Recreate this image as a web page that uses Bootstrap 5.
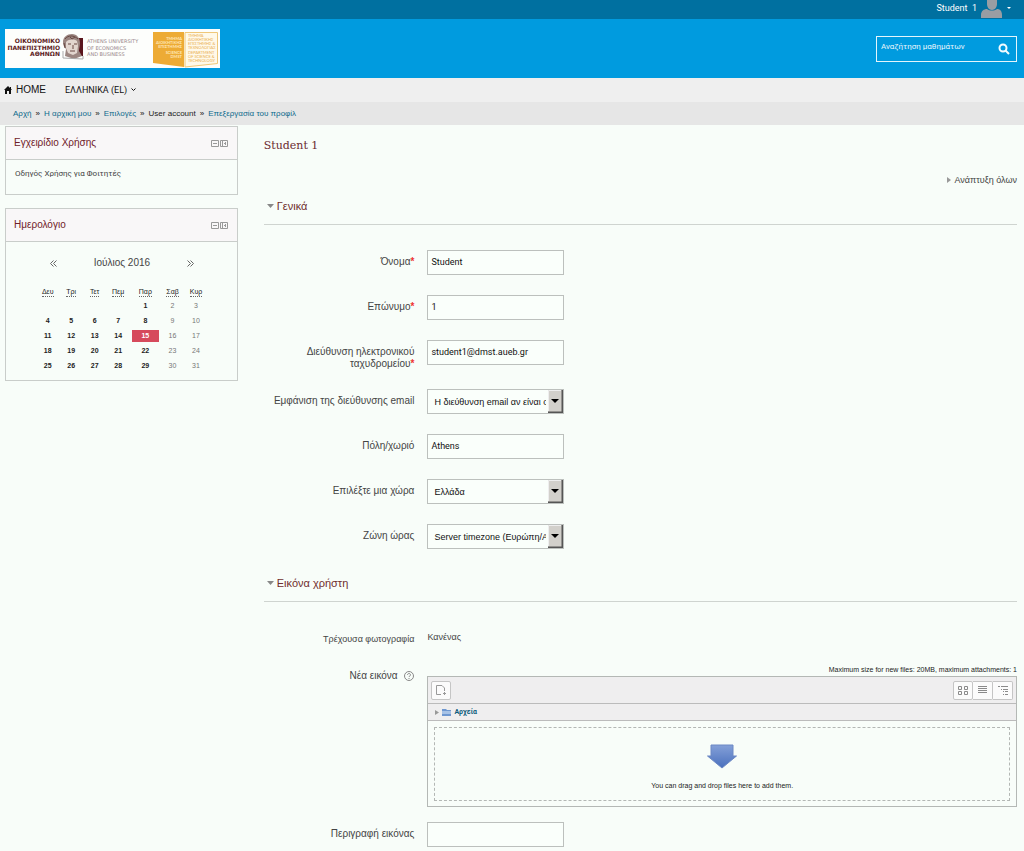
<!DOCTYPE html>
<html lang="el">
<head>
<meta charset="utf-8">
<meta name="viewport" content="width=device-width, initial-scale=1">
<title>Student 1: Επεξεργασία του προφίλ</title>
<link href="https://cdn.jsdelivr.net/npm/bootstrap@5.3.0/dist/css/bootstrap.min.css" rel="stylesheet">
<style>
body{background:#f8fdf9;color:#444;font:10px/12px "Liberation Sans",Arial,sans-serif}
a{color:inherit;text-decoration:none}
.topbar{background:#0070a0;height:19px;color:#fff;font:9px/16px Roboto,sans-serif;padding-right:13px}
.topbar a{gap:4px}
.topbar svg{display:block}
.brandbar{background:#009bdf;height:59px;padding:0 7px 0 5px}
.search-box{width:141px;height:26px;border:1px solid #e4f5fc;padding:0 6px 0 4px}
.search-box input{min-width:0;background:none;border:0;outline:0;color:#fff;font:8px/12px Roboto,sans-serif;padding:0 0 4px}
.search-box input::placeholder{color:#e8f6fc;opacity:1}
.search-box button,.icon-btn{background:none;border:0;padding:0;line-height:0}
.menubar{background:#efefef;height:24px;padding:0 4px;color:#111;gap:19px}
.lang-link{font:9px/12px Roboto,sans-serif}
.crumbs{background:#e6e6e6;height:23px;padding:0 13px;font:8px/12px "Liberation Sans",sans-serif;gap:4px;color:#222;margin:0}
.crumbs a{color:#0d6a8c}
.crumbs li+li::before{content:"»";margin-right:4px;color:#111}
.page-grid{padding:1px 7px 0 5px;gap:26px}
.side-col{width:23%;flex:none}
.block-box{border:1px solid #c9cdca;margin-bottom:13px}
.block-head{background:#f9f7f8;border-bottom:1px solid #c9cdca;height:33px;padding:0 9px 0 8px}
.block-head h2{font-size:10px;line-height:12px;margin:0;color:#702028}
.block-tools{gap:1px}
.guide{padding:8px 9px 14px;font:8px/12px Roboto,sans-serif}
.cal{padding:15px 29px 7px 30px}
.cal-nav{padding:0 14px;margin-bottom:15px}
.cal table{width:100%;table-layout:fixed;font-size:7px;line-height:12px;text-align:center;color:#222;font-weight:bold}
.cal th,.cal td{padding:0;height:15px;line-height:12px;vertical-align:middle}
.cal tbody tr:first-child td{height:14px}
.cal th{font-weight:normal;text-align:center}
.cal abbr{cursor:default;text-decoration:none;border-bottom:1px dotted #666;line-height:8px;display:inline-block}
.cal td:nth-child(n+6){color:#777;font-weight:normal}
.cal col.wide{width:18%}
.cal td span{display:block;background:#d64a5c;color:#fff;margin:0 2px}
.user-title{font:11px/16px "DejaVu Serif",serif;color:#6b2b30;margin:12px 0 20px}
.expand{gap:4px;font-size:9px;margin-bottom:14px}
.sect{border-bottom:1px solid #cfd4d0;padding:0 3px 12px;margin-bottom:25px}
.sect h3{font-size:11px;line-height:12px;margin:0;color:#702d2d}
.sect .icon-btn{margin-right:3px}
.f-row{display:flex;gap:13px;margin-bottom:18px;min-height:27px}
.f-row.plain{min-height:0;font-size:9px}
.f-row.files{margin-bottom:15px}
.f-label{width:20%;flex:none;text-align:right;line-height:12px;padding:6px 0 1px}
.f-label b{color:#e33}
.f-label span{display:block}
.f-in{width:137px;height:25px;border:1px solid #bcc0bd;background-color:#fafffb;border-radius:0;font:9px/12px Roboto,sans-serif;color:#111;padding:0 3px 2px}
select.f-in{appearance:none;font-family:"Liberation Sans",sans-serif;padding:0 17px 0 6px;background-image:url("data:image/svg+xml,%3Csvg xmlns='http://www.w3.org/2000/svg' width='15' height='23'%3E%3Cpath fill='%23d2d0cb' d='M0 0h15v23H0z'/%3E%3Cpath fill='none' stroke='%23555' stroke-width='2' d='M14.500 0v22.500H0'/%3E%3Cpath fill='none' stroke='%23eee' d='M.5 21V.5H13'/%3E%3Cpath fill='%23000' d='M3 9h8L7 13z'/%3E%3C/svg%3E");background-repeat:no-repeat;background-position:right 0 top 0}
.fm{border:1px solid #b4b8b5}
.limits{font:7px/12px "Liberation Sans",sans-serif;text-align:right;color:#222}
.fm-tools{background:#efeeef;height:27px;padding:0 3px;border-bottom:1px solid #bbb}
.fm-btn{width:20px;height:19px;border:1px solid #c5c5c5;background:#fbfbfb;border-radius:2px;padding:0;display:flex;align-items:center;justify-content:center}
.fm-btn+.fm-btn{border-left:0;border-radius:0 2px 2px 0}
.fm-path{background:#efeeef;height:17px;padding:0 7px;border-bottom:1px solid #bbb;font:bold 7px/12px Roboto,sans-serif;gap:3px}
.fm-path a{color:#0d5c7c}
.drop{border:1px dashed #b3b7b4;margin:6px 6px 5px;padding-top:8px;height:74px;gap:10px;font-size:7px;color:#222}
</style>
</head>
<body>
<header>
<div class="topbar d-flex justify-content-end align-items-start overflow-hidden">
<a href="#" class="d-flex">Student&nbsp; 1
<svg width="22" height="18" viewBox="0 0 22 18"><path fill="#999da3" d="M6 0h10v4c0 3-2 6-5 6S6 7 6 4zM0 18v-3c0-4 3-6 6-6 3 2 7 2 10 0 3 0 5 2 5 6v3z"/></svg>
<svg width="4" height="16" viewBox="0 0 4 16"><path fill="#fff" d="M0 7h4L2 9z"/></svg></a>
</div>
<div class="brandbar d-flex justify-content-between align-items-center">
<a href="#" aria-label="Αρχική">
<svg class="d-block" width="215" height="39" viewBox="0 0 215 39">
<path fill="#fdfefc" d="M0 0h215v39H0z"/>
<g font-family="DejaVu Sans,sans-serif" font-weight="700" font-size="6" fill="#5c1b22" text-anchor="end"><text x="55" y="14">ΟΙΚΟΝΟΜΙΚΟ</text><text x="55" y="21">ΠΑΝΕΠΙΣΤΗΜΙΟ</text><text x="55" y="27">ΑΘΗΝΩΝ</text></g>
<path fill="#5a151d" d="M63 9h15v18H63z"/>
<path fill="#9b8681" d="M58 13c0-5 4-8 9-8 5 0 8 4 8 9 0 3-1 5-1 8l3 5-8 3-9-3 1-7c-2-2-3-4-3-7z"/>
<path fill="#e2d6cf" d="M61 13c3-3 8-3 11-1l1 5-1 7-4 2-5-2-2-5z"/>
<path fill="none" stroke="#684943" d="M60 10c3-4 9-4 13 0M63 15h3m3 0h3m-4 1v4m-3 2h5M59 14l1 5M65 8l2 2 3-2"/>
<path fill="none" stroke="#aaa" d="M58 22v7l20 1v-3"/>
<g font-family="DejaVu Sans,sans-serif" font-size="5" fill="#98868a"><text x="82" y="14">ATHENS UNIVERSITY</text><text x="82" y="21">OF ECONOMICS</text><text x="82" y="27">AND BUSINESS</text></g>
<path fill="#edab35" d="M148 3h31v35l-31-4z"/>
<path fill="#fff9e9" stroke="#efc779" d="M180 3.500h32.500v31L180 38z"/>
<g font-family="Lato,sans-serif" font-weight="700" font-size="4" fill="#ffe7b8" text-anchor="end"><text x="177" y="11">ΤΜΗΜΑ</text><text x="177" y="15">ΔΙΟΙΚΗΤΙΚΗΣ</text><text x="177" y="19">ΕΠΙΣΤΗΜΗΣ</text><text x="177" y="25">SCIENCE</text><text x="177" y="29">DMST</text></g>
<g font-family="Lato,sans-serif" font-size="4" fill="#e9ae50"><text x="183" y="8">ΤΜΗΜΑ</text><text x="183" y="12">ΔΙΟΙΚΗΤΙΚΗΣ</text><text x="183" y="16">ΕΠΙΣΤΗΜΗΣ &amp;</text><text x="183" y="20">ΤΕΧΝΟΛΟΓΙΑΣ</text><text x="183" y="25">DEPARTMENT</text><text x="183" y="29">OF SCIENCE &amp;</text><text x="183" y="33">TECHNOLOGY</text></g>
</svg></a>
<form class="search-box d-flex align-items-center">
<input class="flex-grow-1" type="search" aria-label="Αναζήτηση μαθημάτων" placeholder="Αναζήτηση μαθημάτων">
<button type="button" aria-label="Αναζήτηση"><svg width="12" height="12" viewBox="0 0 12 12" fill="none" stroke="#f2fbff" stroke-width="2"><circle cx="5" cy="5" r="3.500"/><path d="M7.500 7.500 11 11"/></svg></button>
</form>
</div>
<nav class="menubar d-flex align-items-center">
<a href="#" class="d-flex align-items-center"><svg class="me-1" width="8" height="8" viewBox="0 0 8 8"><path fill="#111" d="M4 0 0 4h1v4h2V5h2v3h2V4h1L7 3V1H6v1z"/></svg>HOME</a>
<a href="#" class="lang-link d-flex align-items-center">ΕΛΛΗΝΙΚΑ (EL)<svg class="ms-1" width="5" height="4" viewBox="0 0 5 4"><path fill="none" stroke="#111" d="m.5.500 2 2 2-2"/></svg></a>
</nav>
<ol class="crumbs list-unstyled d-flex align-items-center">
<li><a href="#">Αρχή</a></li><li><a href="#">Η αρχική μου</a></li><li><a href="#">Επιλογές</a></li><li>User account</li><li><a href="#">Επεξεργασία του προφίλ</a></li>
</ol>
</header>

<svg width="0" height="0" class="position-absolute"><defs>
<g id="i-min" fill="none" stroke="#999"><path d="M.5.500h7v6h-7zM2 3.500h4"/></g>
<g id="i-dock" fill="none" stroke="#999"><path d="M.5.500h7v6h-7zM2.500 1v5M5.500 2v3M4 3.500h2"/></g>
</defs></svg>

<div class="page-grid d-flex">
<aside class="side-col">
<section class="block-box">
<div class="block-head d-flex align-items-center justify-content-between"><h2 class="fw-normal">Εγχειρίδιο Χρήσης</h2>
<div class="block-tools d-flex"><button class="icon-btn" aria-label="Απόκρυψη"><svg width="8" height="7"><use href="#i-min"/></svg></button><button class="icon-btn" aria-label="Προσάρτηση"><svg width="8" height="7"><use href="#i-dock"/></svg></button></div></div>
<div class="guide"><a href="#">Οδηγός Χρήσης για Φοιτητές</a></div>
</section>
<section class="block-box">
<div class="block-head d-flex align-items-center justify-content-between"><h2 class="fw-normal">Ημερολόγιο</h2>
<div class="block-tools d-flex"><button class="icon-btn" aria-label="Απόκρυψη"><svg width="8" height="7"><use href="#i-min"/></svg></button><button class="icon-btn" aria-label="Προσάρτηση"><svg width="8" height="7"><use href="#i-dock"/></svg></button></div></div>
<div class="cal">
<div class="cal-nav d-flex justify-content-between"><a href="#" aria-label="Προηγούμενος"><svg width="7" height="7" viewBox="0 0 7 7" fill="none" stroke="#666"><path d="M3.500.500l-3 3 3 3m3-6-3 3 3 3"/></svg></a><a href="#">Ιούλιος 2016</a><a href="#" aria-label="Επόμενος"><svg width="7" height="7" viewBox="0 0 7 7" fill="none" stroke="#666"><path d="m.5.500 3 3-3 3m3-6 3 3-3 3"/></svg></a></div>
<table>
<colgroup><col><col><col><col><col class="wide"><col><col></colgroup>
<thead><tr><th><abbr>Δευ</abbr></th><th><abbr>Τρι</abbr></th><th><abbr>Τετ</abbr></th><th><abbr>Πεμ</abbr></th><th><abbr>Παρ</abbr></th><th><abbr>Σαβ</abbr></th><th><abbr>Κυρ</abbr></th></tr></thead>
<tbody>
<tr><td></td><td></td><td></td><td></td><td>1</td><td>2</td><td>3</td></tr>
<tr><td>4</td><td>5</td><td>6</td><td>7</td><td>8</td><td>9</td><td>10</td></tr>
<tr><td>11</td><td>12</td><td>13</td><td>14</td><td><span>15</span></td><td>16</td><td>17</td></tr>
<tr><td>18</td><td>19</td><td>20</td><td>21</td><td>22</td><td>23</td><td>24</td></tr>
<tr><td>25</td><td>26</td><td>27</td><td>28</td><td>29</td><td>30</td><td>31</td></tr>
</tbody></table>
</div>
</section>
</aside>

<main class="flex-grow-1">
<h1 class="user-title">Student 1</h1>
<a href="#" class="expand d-flex justify-content-end align-items-center"><svg width="4" height="6"><path fill="#999" d="M0 0v6l4-3z"/></svg>Ανάπτυξη όλων</a>
<form>
<div class="sect d-flex align-items-center"><button type="button" class="icon-btn" aria-label="Γενικά"><svg width="7" height="4"><path fill="#888" d="M0 0h7L3.500 4z"/></svg></button><h3 class="fw-normal">Γενικά</h3></div>
<div class="f-row"><label class="f-label" for="fn">Όνομα<b>*</b></label><input class="f-in" id="fn" value="Student"></div>
<div class="f-row"><label class="f-label" for="ln">Επώνυμο<b>*</b></label><input class="f-in" id="ln" value="1"></div>
<div class="f-row"><label class="f-label" for="em"><span>Διεύθυνση ηλεκτρονικού</span> <span>ταχυδρομείου<b>*</b></span></label><input class="f-in" id="em" value="student1@dmst.aueb.gr"></div>
<div class="f-row"><label class="f-label" for="sh">Εμφάνιση της διεύθυνσης email</label><select class="f-in" id="sh"><option>Η διεύθυνση email αν είναι ορατή</option></select></div>
<div class="f-row"><label class="f-label" for="ct">Πόλη/χωριό</label><input class="f-in" id="ct" value="Athens"></div>
<div class="f-row"><label class="f-label" for="co">Επιλέξτε μια χώρα</label><select class="f-in" id="co"><option>Ελλάδα</option></select></div>
<div class="f-row"><label class="f-label" for="tz">Ζώνη ώρας</label><select class="f-in" id="tz"><option>Server timezone (Ευρώπη/Αθήνα)</option></select></div>

<div class="sect d-flex align-items-center pt-2"><button type="button" class="icon-btn" aria-label="Εικόνα χρήστη"><svg width="7" height="4"><path fill="#888" d="M0 0h7L3.500 4z"/></svg></button><h3 class="fw-normal">Εικόνα χρήστη</h3></div>
<div class="f-row plain"><div class="f-label">Τρέχουσα φωτογραφία</div><div class="pt-1">Κανένας</div></div>
<div class="f-row files"><div class="f-label">Νέα εικόνα <button type="button" class="icon-btn ms-1 align-middle" aria-label="Βοήθεια"><svg width="10" height="10" viewBox="0 0 10 10" fill="none" stroke="#888"><circle cx="5" cy="5" r="4.500"/><path d="M3.500 4c0-2 3-2 3 0 0 1-1.500 1-1.500 2M5 7v1"/></svg></button></div>
<div class="flex-grow-1">
<div class="limits">Maximum size for new files: 20MB, maximum attachments: 1</div>
<div class="fm">
<div class="fm-tools d-flex align-items-center justify-content-between">
<button type="button" class="fm-btn" aria-label="Προσθήκη"><svg width="10" height="10" viewBox="0 0 10 10" fill="none" stroke="#999"><path d="M5 9.500H.5v-9H6L8.500 3v3M7 8.500h3M8.500 7v3"/></svg></button>
<div class="d-flex">
<button type="button" class="fm-btn" aria-label="Εικονίδια"><svg width="10" height="9" viewBox="0 0 10 9" fill="none" stroke="#8a8a8a"><path d="M.5.500h3v3h-3zM6.500.500h3v3h-3zM.5 5.500h3v3h-3zM6.500 5.500h3v3h-3z"/></svg></button>
<button type="button" class="fm-btn" aria-label="Λίστα"><svg width="9" height="8" viewBox="0 0 9 8" stroke="#8a8a8a"><path d="M0 .5h9M0 2.500h9M0 4.500h9M0 6.500h9"/></svg></button>
<button type="button" class="fm-btn" aria-label="Δέντρο"><svg width="10" height="9" viewBox="0 0 10 9" stroke="#8a8a8a"><path d="M0 .5h2M3 .5h7M3 3.500h1M5 3.500h5M5 5.500h1M7 5.500h3M5 8.500h1M7 8.500h3"/></svg></button>
</div></div>
<div class="fm-path d-flex align-items-center"><svg width="4" height="5"><path fill="#999" d="M0 0v5l4-2.500z"/></svg><svg width="9" height="7" viewBox="0 0 9 7"><path fill="#6f97d0" d="M0 0h4l1 1h4v6H0z"/><path fill="#a7c2e6" d="M0 2h9v3H0z"/></svg><a href="#">Αρχεία</a></div>
<div class="drop d-flex flex-column align-items-center justify-content-center">
<svg width="30" height="26" viewBox="0 0 30 26"><defs><linearGradient id="ga" x2="0" y2="1"><stop stop-color="#84a0d8"/><stop offset="1" stop-color="#4a70bd"/></linearGradient></defs><path fill="url(#ga)" stroke="#6c88c4" d="M4 1h22v11h3.500L15 24 .5 12H4z"/></svg>
<div>You can drag and drop files here to add them.</div></div>
</div></div></div>
<div class="f-row mb-0"><label class="f-label" for="ds">Περιγραφή εικόνας</label><input class="f-in" id="ds"></div>
</form>
</main>
</div>
<script src="https://cdn.jsdelivr.net/npm/bootstrap@5.3.0/dist/js/bootstrap.bundle.min.js"></script>
</body>
</html>
